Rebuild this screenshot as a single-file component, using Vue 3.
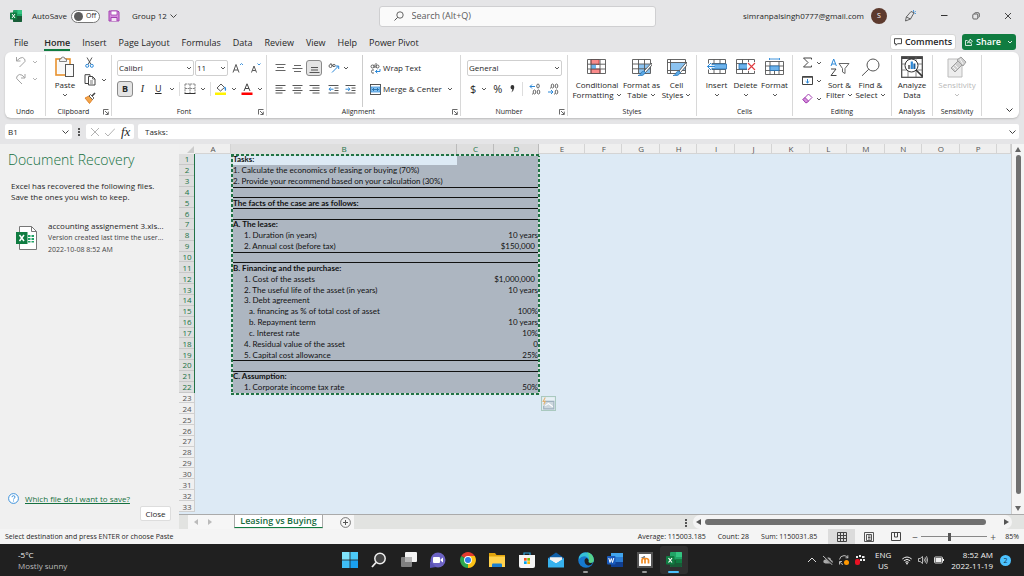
<script setup>
import { h, ref } from 'vue'

const Chev = () =>
  h('svg', { class: 'chev', viewBox: '0 0 6 6', 'aria-hidden': 'true' }, [
    h('path', { d: 'M1 2l2 2 2-2', fill: 'none', stroke: 'currentColor', 'stroke-width': '0.9' })
  ])
const Launcher = () =>
  h('svg', { class: 'launch', viewBox: '0 0 6 6', 'aria-hidden': 'true' }, [
    h('path', { d: 'M.5 5.5V.5h5M2 2l3 3M5.3 2.6v2.9H2.4', fill: 'none', stroke: '#444', 'stroke-width': '.8' })
  ])

const tabs = ['File', 'Home', 'Insert', 'Page Layout', 'Formulas', 'Data', 'Review', 'View', 'Help', 'Power Pivot']
const cols = 'ABCDEFGHIJKLMNOP'.split('')
const font = ref('Calibri')
const size = ref('11')
const numberFormat = ref('General')
const cellName = ref('B1')
const formula = ref('Tasks:')
const zoom = ref(42)

const data = {
  1: { b: 'Tasks:', bold: true },
  2: { b: '1. Calculate the economics of leasing or buying (70%)' },
  3: { b: '2. Provide your recommend based on your calculation (30%)' },
  4: { line: true },
  5: { b: 'The facts of the case are as follows:', bold: true, line: true },
  6: { line: true },
  7: { b: 'A. The lease:', bold: true, line: true },
  8: { b: '1. Duration (in years)', ind: 1, d: '10 years' },
  9: { b: '2. Annual cost (before tax)', ind: 1, d: '$150,000', money: true },
  10: { line: true },
  11: { b: 'B. Financing and the purchase:', bold: true, line: true },
  12: { b: '1. Cost of the assets', ind: 1, d: '$1,000,000', money: true },
  13: { b: '2. The useful life of the asset (in years)', ind: 1, d: '10 years' },
  14: { b: '3. Debt agreement', ind: 1 },
  15: { b: 'a. financing as % of total cost of asset', ind: 2, d: '100%' },
  16: { b: 'b. Repayment term', ind: 2, d: '10 years' },
  17: { b: 'c. Interest rate', ind: 2, d: '10%' },
  18: { b: '4. Residual value of the asset', ind: 1, d: '0' },
  19: { b: '5. Capital cost allowance', ind: 1, d: '25%' },
  20: { line: true },
  21: { b: 'C. Assumption:', bold: true, line: true },
  22: { b: '1. Corporate income tax rate', ind: 1, d: '50%' }
}
const rows = Array.from({ length: 33 }, (_, i) => ({ n: i + 1, sel: i < 22, ...(data[i + 1] || {}) }))
</script>

<template>
  <div class="window">
    <header class="titlebar">
      <div class="title-left">
        <svg class="i12" viewBox="0 0 12 12"><rect x="3" y="0" width="9" height="12" rx="1" fill="#21a366"/><path d="M7.500 0H11a1 1 0 0 1 1 1v3H7.500z" fill="#33c481"/><path d="M3 6h9v5a1 1 0 0 1-1 1H4a1 1 0 0 1-1-1z" fill="#185c37"/><rect x="0" y="2.500" width="7" height="7" rx=".7" fill="#107c41"/><path d="M2 4l3 4M5 4L2 8" stroke="#fff" stroke-width="1"/></svg>
        <label class="autosave">AutoSave
          <span class="toggle"><input type="checkbox"><i class="knob"></i>Off</span>
        </label>
        <button class="plain save" aria-label="Save"><svg class="i12" viewBox="0 0 12 12"><path d="M1 1h9l1 1v9H1z" fill="#d58fdc" stroke="#a33fb1"/><path d="M3 1h6v4H3z" fill="#fff" stroke="#a33fb1" stroke-width=".8"/><path d="M3 11V7.500h6V11" fill="#f3e3f5" stroke="#a33fb1"/></svg></button>
        <button class="plain doc">Group 12 <svg class="c7" viewBox="0 0 7 6"><path d="M.500 1.500l3 3 3-3" fill="none" stroke="#333" stroke-width=".9"/></svg></button>
      </div>
      <label class="search">
        <svg class="i10" viewBox="0 0 10 10"><circle cx="6" cy="4" r="3.200" fill="none" stroke="#555" stroke-width=".9"/><path d="M3.700 6.300L.5 9.500" stroke="#555"/></svg>
        <input type="text" placeholder="Search (Alt+Q)" aria-label="Search">
      </label>
      <div class="title-right">
        <span class="account">simranpalsingh0777@gmail.com</span>
        <span class="avatar">S</span>
        <button class="plain pen" aria-label="Pen"><svg class="i12" viewBox="0 0 12 12"><path d="M1.500 11l.8-4L7 1.500l3 1.300L6.500 9 1.500 11zM2.300 7L6.500 9" fill="none" stroke="#444" stroke-width=".8"/><path d="M9.500 0v2M11.800 1l-1.500 1.500M10.500 3.500H12" stroke="#2b88d8" stroke-width=".8"/></svg></button>
        <button class="plain wbtn" aria-label="Minimize"><svg class="i8" viewBox="0 0 8 8"><path d="M1 3.500h6.500" stroke="#333"/></svg></button>
        <button class="plain wbtn" aria-label="Restore"><svg class="i8" viewBox="0 0 8 8"><rect x=".8" y="2" width="5" height="5" rx="1" fill="none" stroke="#444" stroke-width=".8"/><path d="M2.500 1.500Q2.500.7 3.500.7H6Q7.300.7 7.300 2v2.500q0 .8-.8.8" fill="none" stroke="#444" stroke-width=".8"/></svg></button>
        <button class="plain wbtn" aria-label="Close window"><svg class="i8" viewBox="0 0 8 8"><path d="M1 1l6 6M7 1L1 7" stroke="#333" stroke-width=".9"/></svg></button>
      </div>
    </header>

    <nav class="tabs">
      <button v-for="t in tabs" :key="t" class="plain tab" :class="{ active: t === 'Home' }">{{ t }}</button>
      <div class="tab-actions">
        <button class="comments"><svg class="i8" viewBox="0 0 8 8"><path d="M.5.700h7v5H3.500L2 7.300V5.700H.5z" fill="none" stroke="#333" stroke-width=".9"/></svg>Comments</button>
        <button class="share"><svg class="i8" viewBox="0 0 8 8"><path d="M2.500 2.500H.5v5h6V5.500M2.500 5Q2.800 2.700 5 2.700V1l2.500 2.300L5 5.300V3.900Q3.500 3.900 2.500 5z" fill="none" stroke="#fff" stroke-width=".8"/></svg>Share<Chev /></button>
      </div>
    </nav>

    <section class="ribbon">
      <div class="group g-undo">
        <div class="body col-undo">
          <button class="plain row dim" aria-label="Undo"><svg class="i12" viewBox="0 0 12 12"><path d="M1.500 1v4h4M1.700 4.800L5 2.100Q8 .5 9.600 3T8.500 7L4.500 11" fill="none" stroke="#a3a3a3"/></svg><Chev /></button>
          <button class="plain row dim" aria-label="Redo"><svg class="i12" viewBox="0 0 12 12"><path d="M10 1v4H6M9.800 4.800L7 2.100Q4 .5 2.200 3T3 7l4 4" fill="none" stroke="#a3a3a3"/></svg><Chev /></button>
        </div>
        <div class="glabel">Undo</div>
      </div>

      <div class="group g-clip">
        <div class="body">
          <button class="plain big paste"><svg class="i22" viewBox="0 0 22 22"><rect x="2" y="3" width="14" height="16" fill="#fff" stroke="#e8912d" stroke-width="1.600"/><rect x="3.500" y="4.500" width="11" height="13" fill="#f7f7f7"/><path d="M5.500 5.500V3H7q0-2 2-2t2 2h1.500v2.500z" fill="#f2f2f2" stroke="#777" stroke-width=".9"/><rect x="11.500" y="8.500" width="8" height="12" fill="#fafafa" stroke="#555"/></svg>Paste<Chev /></button>
          <div class="stack">
            <button class="plain row" aria-label="Cut"><svg class="i11" viewBox="0 0 11 11"><path d="M3 .5l4 7M8 .5l-4 7" stroke="#444" stroke-width=".9"/><circle cx="3.200" cy="8.800" r="1.500" fill="none" stroke="#2b88d8"/><circle cx="7.800" cy="8.800" r="1.500" fill="none" stroke="#2b88d8"/></svg></button>
            <button class="plain row" aria-label="Copy"><svg class="i12" viewBox="0 0 12 12"><path d="M4 9.500H1V.7h5V2" fill="none" stroke="#444"/><path d="M4.500 2.500h4l2.500 2.500v6H4.500z" fill="#fff" stroke="#444"/><path d="M8.500 2.500V5H11M6 7h3M6 9h3" fill="none" stroke="#444" stroke-width=".7"/></svg><Chev /></button>
            <button class="plain row" aria-label="Format painter"><svg class="i12" viewBox="0 0 12 12"><path d="M1 6l4-2 3.500 3.500-3 4z" fill="#f3a54a" stroke="#d9761a" stroke-width=".8"/><path d="M5 4l1.500-1.500 3.500 3.500L8.500 7.500z" fill="#fff" stroke="#444" stroke-width=".8"/><path d="M8 4L11 1" stroke="#444" stroke-width="1.600"/></svg></button>
          </div>
        </div>
        <div class="glabel wl">Clipboard<Launcher /></div>
      </div>

      <div class="group g-font">
        <div class="body two">
          <div class="line">
            <span class="sel w-font"><select v-model="font" aria-label="Font"><option>Calibri</option></select><Chev /></span>
            <span class="sel w-size"><select v-model="size" aria-label="Font size"><option>11</option></select><Chev /></span>
            <button class="plain fs" aria-label="Increase font size"><svg class="i12" viewBox="0 0 12 12"><path d="M1 10.500L4 2.500l3 8M2 8h4" fill="none" stroke="#444" stroke-width=".9"/><path d="M8 3l1.500-1.500L11 3" fill="none" stroke="#2b88d8" stroke-width=".9"/></svg></button>
            <button class="plain fs" aria-label="Decrease font size"><svg class="i12" viewBox="0 0 12 12"><path d="M1.500 10.500L4 4l2.500 6.500M2.500 8.500h3" fill="none" stroke="#444" stroke-width=".9"/><path d="M7.500 1.500L9 3l1.500-1.500" fill="none" stroke="#2b88d8" stroke-width=".9"/></svg></button>
          </div>
          <div class="line fmt">
            <button class="pressed bold">B</button>
            <button class="plain ital">I</button>
            <button class="plain und"><u>U</u><Chev /></button>
            <i class="vsep"></i>
            <button class="plain row" aria-label="Borders"><svg class="i12" viewBox="0 0 12 12"><path d="M1 1h10M1 1v9M11 1v9M6 1v9M1 5.500h10" fill="none" stroke="#777" stroke-width=".9" stroke-dasharray="2 .6"/><path d="M.5 10.500h11" stroke="#333"/></svg><Chev /></button>
            <i class="vsep"></i>
            <button class="plain row" aria-label="Fill color"><svg class="i12" viewBox="0 0 12 12"><path d="M2 5l4-4 3.500 3.500L5.500 8z" fill="#fff" stroke="#444" stroke-width=".9"/><path d="M9.500 4q1.700 2 .5 3.500" fill="none" stroke="#2b88d8" stroke-width="1.300"/><rect x="0" y="9.500" width="11" height="2.500" fill="#fff200"/></svg><Chev /></button>
            <button class="plain row" aria-label="Font color"><svg class="i12" viewBox="0 0 12 12"><path d="M3 8L6 .8 9 8M4 5.500h4" fill="none" stroke="#444"/><rect x=".5" y="9.500" width="11" height="2.500" fill="#f00"/></svg><Chev /></button>
          </div>
        </div>
        <div class="glabel wl">Font<Launcher /></div>
      </div>

      <div class="group g-align">
        <div class="body">
          <div class="two a-left">
            <div class="line">
              <button class="plain ab" aria-label="Top align"><svg class="i11" viewBox="0 0 11 11"><path d="M.5 1.500h10M2 4.500h7M.5 7.500h10" stroke="#555" stroke-width=".9"/></svg></button>
              <button class="plain ab" aria-label="Middle align"><svg class="i11" viewBox="0 0 11 11"><path d="M2 2.500h7M.5 5.500h10M2 8.500h7" stroke="#555" stroke-width=".9"/></svg></button>
              <button class="pressed ab" aria-label="Bottom align"><svg class="i11" viewBox="0 0 11 11"><path d="M2 4.500h7M2 7h7M.5 9.500h10" stroke="#444" stroke-width=".9"/></svg></button>
              <button class="plain row orient" aria-label="Orientation"><svg class="i12" viewBox="0 0 12 12"><circle cx="2.500" cy="4" r="1.500" fill="none" stroke="#444" stroke-width=".8"/><path d="M2.500 1l3 3.500" stroke="#444" stroke-width=".8"/><circle cx="6" cy="3.500" r="1.200" fill="none" stroke="#444" stroke-width=".8"/><path d="M4 10.500l6.500-6.500M7.500 4H10.700V7" fill="none" stroke="#2b88d8"/></svg><Chev /></button>
            </div>
            <div class="line">
              <button class="plain ab" aria-label="Align left"><svg class="i11" viewBox="0 0 11 11"><path d="M.5 1.500h10M.5 4h7M.5 6.500h10M.5 9h7" stroke="#444" stroke-width=".9"/></svg></button>
              <button class="plain ab" aria-label="Center"><svg class="i11" viewBox="0 0 11 11"><path d="M.5 1.500h10M2 4h7M.5 6.500h10M2 9h7" stroke="#444" stroke-width=".9"/></svg></button>
              <button class="plain ab" aria-label="Align right"><svg class="i11" viewBox="0 0 11 11"><path d="M.5 1.500h10M3.500 4h7M.5 6.500h10M3.500 9h7" stroke="#444" stroke-width=".9"/></svg></button>
              <button class="plain ab" aria-label="Decrease indent"><svg class="i11" viewBox="0 0 11 11"><path d="M.5 1.500h10M6.500 4h4M6.500 6.500h4M.5 9h10" stroke="#444" stroke-width=".9"/><path d="M5.500 5.200H1M2.800 3.500L1 5.200 2.800 7" fill="none" stroke="#2b88d8"/></svg></button>
              <button class="plain ab" aria-label="Increase indent"><svg class="i11" viewBox="0 0 11 11"><path d="M.5 1.500h10M6.500 4h4M6.500 6.500h4M.5 9h10" stroke="#444" stroke-width=".9"/><path d="M.5 5.200H5M3.200 3.500L5 5.200 3.200 7" fill="none" stroke="#2b88d8"/></svg></button>
            </div>
          </div>
          <div class="two a-right">
            <div class="line"><button class="plain row"><svg class="i11" viewBox="0 0 11 11"><circle cx="2.500" cy="3.500" r="1.500" fill="none" stroke="#444" stroke-width=".8"/><path d="M4.200 1.500v3.500M6 0v5" stroke="#444" stroke-width=".8"/><circle cx="7.500" cy="3.500" r="1.500" fill="none" stroke="#444" stroke-width=".8"/><path d="M4 7Q1.500 6 1.500 8.500T4 10" fill="none" stroke="#444" stroke-width=".8"/><path d="M10 6v2.500H5.500M7.300 6.800L5.500 8.500l1.800 1.700" fill="none" stroke="#2b88d8"/></svg>Wrap Text</button></div>
            <div class="line"><button class="plain row merge"><svg class="i11" viewBox="0 0 11 11"><rect x=".5" y=".5" width="10" height="10" fill="#fff" stroke="#444" stroke-width=".9"/><rect x="1" y="3" width="9" height="5" fill="#8ec5f0" stroke="#2b88d8" stroke-width=".7"/><path d="M2.500 5.500h6M4 4L2.500 5.500 4 7M7 4l1.500 1.500L7 7" fill="none" stroke="#1464a5" stroke-width=".8"/></svg><span>Merge &amp; Center</span><Chev /></button></div>
          </div>
        </div>
        <div class="glabel wl">Alignment<Launcher /></div>
      </div>

      <div class="group g-num">
        <div class="body two">
          <div class="line"><span class="sel w-num"><select v-model="numberFormat" aria-label="Number format"><option>General</option></select><Chev /></span></div>
          <div class="line nums">
            <button class="plain row sym">$<Chev /></button>
            <button class="plain sym">%</button>
            <button class="plain" aria-label="Comma style"><svg class="i8" viewBox="0 0 8 8"><path d="M4.500 0q2 .2 1.700 3T3 7.500Q4.500 6 4.400 4.500 2.500 4.300 2.500 2.200T4.500 0z" fill="#333"/></svg></button>
            <i class="vsep"></i>
            <button class="plain dec" aria-label="Increase decimal"><svg class="i12" viewBox="0 0 12 12"><path d="M6 3.500H1M3 1.500l-2 2 2 2" fill="none" stroke="#2b88d8"/><g fill="none" stroke="#444" stroke-width=".8"><ellipse cx="9" cy="3" rx="1.300" ry="2"/><ellipse cx="5.500" cy="9" rx="1.300" ry="2"/><ellipse cx="9.500" cy="9" rx="1.300" ry="2"/></g><path d="M3 11h.8" stroke="#444"/></svg></button>
            <button class="plain dec" aria-label="Decrease decimal"><svg class="i12" viewBox="0 0 12 12"><path d="M1 9h5M4 7l2 2-2 2" fill="none" stroke="#2b88d8"/><g fill="none" stroke="#444" stroke-width=".8"><ellipse cx="5.500" cy="3" rx="1.300" ry="2"/><ellipse cx="9.500" cy="3" rx="1.300" ry="2"/><ellipse cx="9.500" cy="9" rx="1.300" ry="2"/></g><path d="M3 5h.8M7 11h.8" stroke="#444"/></svg></button>
          </div>
        </div>
        <div class="glabel wl">Number<Launcher /></div>
      </div>

      <div class="group g-styles">
        <div class="body">
          <button class="plain big w50"><svg class="i20" viewBox="0 0 20 18"><rect x=".5" y="1.500" width="18" height="14" fill="#fff"/><path d="M4 1.500h8v5H4zM4 11h9v4.500H4z" fill="#f98a8a" stroke="#d13438" stroke-width=".8"/><path d="M4 6.500h5V11H4z" fill="#6cb2eb"/><path d="M.5 1.500h18v14H.5zM.5 6.200h18M.5 11h18M4 1.500v14M13 1.500v14" fill="none" stroke="#555" stroke-width=".9"/></svg><span>Conditional</span><span>Formatting <Chev /></span></button>
          <button class="plain big w38"><svg class="i20" viewBox="0 0 20 18"><path d="M.5 1.500h18v14H.5z" fill="#fff"/><path d="M6.500 6h12v9.500h-12z" fill="#8cc3f0"/><path d="M.5 1.500h18v14H.5zM.5 6h18M.5 10.800h18M6.500 1.500v14M12.500 1.500v14" fill="none" stroke="#555" stroke-width=".9"/><path d="M19.500 5l-7.500 8 1.500 1.500L20 7z" fill="#fff" stroke="#444" stroke-width=".8"/><path d="M12 13q-3 .5-3.500 3-1 1.500-2.500 1.500 5 1.500 7.500-3z" fill="#5ba9e6" stroke="#2471b5" stroke-width=".7"/></svg><span>Format as</span><span>Table <Chev /></span></button>
          <button class="plain big w32"><svg class="i20" viewBox="0 0 20 18"><path d="M.5 1.500h18v14H.5z" fill="#fff"/><path d="M3.500 4.500h15v8h-15z" fill="#8cc3f0"/><path d="M.5 1.500h18v14H.5zM.5 4.500h18M3.500 1.500v14M.5 12.500h18" fill="none" stroke="#555" stroke-width=".9"/><path d="M19.500 4l-7.500 9 1.500 1.500L20 7z" fill="#fff" stroke="#444" stroke-width=".8"/><path d="M12 13q-3 .5-3.500 3-1 1.500-2.500 1.500 5 1.500 7.500-3z" fill="#5ba9e6" stroke="#2471b5" stroke-width=".7"/></svg><span>Cell</span><span>Styles <Chev /></span></button>
        </div>
        <div class="glabel">Styles</div>
      </div>

      <div class="group g-cells">
        <div class="body">
          <button class="plain big w28"><svg class="i20" viewBox="0 0 20 18"><path d="M1.500 1.500h17v14h-17zM1.500 5.500h17M1.500 11.500h17M7 1.500v14M13 1.500v14" fill="#fff" stroke="#555" stroke-width=".9"/><path d="M5 6h14.500v5H5z" fill="#6db3ec" stroke="#2471b5" stroke-width=".8"/><path d="M7.500 8.500H0M4 4.500L.5 8.500 4 12.500" fill="none" stroke="#fff" stroke-width="2.500"/><path d="M8 8.500H.5M4 5L.5 8.500 4 12" fill="none" stroke="#2b88d8"/></svg><span>Insert</span><Chev /></button>
          <button class="plain big w28"><svg class="i20" viewBox="0 0 20 18"><path d="M.5 1.500h18v14H.5zM.5 5.500h18M.5 11.500h18M6.500 1.500v14M12.500 1.500v14" fill="#fff" stroke="#555" stroke-width=".9"/><path d="M3 6h9l-1 5H3z" fill="#6db3ec" stroke="#2471b5" stroke-width=".8"/><path d="M11 4h9v9h-9z" fill="#fff"/><path d="M12 5l7 7M19 5l-7 7" stroke="#e0393e" stroke-width="1.100"/></svg><span>Delete</span><Chev /></button>
          <button class="plain big w28"><svg class="i20" viewBox="0 0 20 18"><path d="M.5 3.500h18v13H.5zM.5 8h18M.5 12.500h18M5 3.500v13M14 3.500v13M9.500 12.500v4" fill="#fff" stroke="#555" stroke-width=".9"/><path d="M5 8h9v4.500H5z" fill="#6db3ec" stroke="#2471b5" stroke-width=".8"/><path d="M4.500 1h10M4.500 0v2M14.500 0v2" stroke="#2b88d8" stroke-width=".9"/></svg><span>Format</span><Chev /></button>
        </div>
        <div class="glabel">Cells</div>
      </div>

      <div class="group g-edit">
        <div class="body">
          <div class="stack">
            <button class="plain row" aria-label="AutoSum"><svg class="i11" viewBox="0 0 11 11"><path d="M9.500 2.500V1H1.500L6 5.500 1.500 10h8V8.500" fill="none" stroke="#444"/></svg><Chev /></button>
            <button class="plain row" aria-label="Fill"><svg class="i11" viewBox="0 0 11 11"><path d="M.5 1.500h10v8H.5z" fill="#fff" stroke="#444"/><path d="M.5 2h10" stroke="#444" stroke-width="1.500"/><path d="M5.500 4v4M3.700 6.300L5.500 8l1.800-1.700" fill="none" stroke="#2b88d8"/></svg><Chev /></button>
            <button class="plain row" aria-label="Clear"><svg class="i11" viewBox="0 0 11 11"><path d="M1 6.500L6.500 1 10 4.500 5 9.500H3.500z" fill="#fff" stroke="#a33fb1"/><path d="M1 6.500L3 4.500l3.500 3.500L5 9.700H3.500z" fill="#d58fdc" stroke="#a33fb1"/></svg><Chev /></button>
          </div>
          <button class="plain big w30"><svg class="i20" viewBox="0 0 20 18"><path d="M1 8L3.700 1l2.700 7M2 6h3.500" fill="none" stroke="#2b88d8"/><path d="M1 11h5L1 17.500h5.500" fill="none" stroke="#444"/><path d="M9 5.500h10l-4 5v5l-2.500-1.500v-3.500z" fill="#fff" stroke="#666"/></svg><span>Sort &amp;</span><span>Filter <Chev /></span></button>
          <button class="plain big w30"><svg class="i20" viewBox="0 0 20 18"><circle cx="12" cy="7" r="6" fill="#fff" stroke="#555"/><path d="M7.800 11.200L1 17.800" stroke="#555"/></svg><span>Find &amp;</span><span>Select <Chev /></span></button>
        </div>
        <div class="glabel">Editing</div>
      </div>

      <div class="group g-anal">
        <div class="body">
          <button class="plain big w40"><svg class="i22" viewBox="0 0 22 22"><rect x=".7" y=".7" width="20.600" height="20.600" fill="#fff" stroke="#444" stroke-width="1.200"/><path d="M.5 2h21" stroke="#444" stroke-width="2"/><path d="M.5 8h21M.5 14h21M7 1v20M15 1v20" stroke="#666" stroke-width=".8"/><circle cx="10.500" cy="9.500" r="6.500" fill="#fff" stroke="#333"/><path d="M7 9h2.200v4H7z" fill="#777"/><path d="M9.700 5.500h2.200V13H9.700z" fill="#2b88d8"/><path d="M12.400 7.500h2V13h-2z" fill="#1b5e9b"/><path d="M15 14l6.500 6.500" stroke="#333" stroke-width="1.600"/></svg><span>Analyze</span><span>Data</span></button>
        </div>
        <div class="glabel">Analysis</div>
      </div>

      <div class="group g-sens">
        <div class="body">
          <button class="plain big w48 off" disabled><svg class="i22" viewBox="0 0 22 22"><path d="M2 3h14v18H2z" fill="#ededed" stroke="#bbb"/><path d="M5 12l7-7 4 4-7 7zM11 4l4-3 5 5-3 4z" fill="#d0d0d0" stroke="#a0a0a0"/><path d="M7 11l3 3M9 9l3 3M14 3l3 5" stroke="#fff" stroke-width=".8"/></svg><span>Sensitivity</span><Chev /></button>
        </div>
        <div class="glabel">Sensitivity</div>
      </div>
      <button class="plain collapse" aria-label="Collapse ribbon"><svg class="c7" viewBox="0 0 7 6"><path d="M.5 1.500l3 3 3-3" fill="none" stroke="#333"/></svg></button>
    </section>

    <section class="fbar">
      <div class="namebox"><input v-model="cellName" aria-label="Name box"><svg class="c7" viewBox="0 0 7 6"><path d="M.5 1.500l3 3 3-3" fill="none" stroke="#444"/></svg></div>
      <svg class="dots" viewBox="0 0 2 8"><path d="M0 0h2v2H0zM0 3h2v2H0zM0 6h2v2H0z" fill="#555"/></svg>
      <div class="fx">
        <button class="plain" aria-label="Cancel"><svg class="i8" viewBox="0 0 8 8"><path d="M0 0l8 8M8 0L0 8" stroke="#aaa" stroke-width=".9"/></svg></button>
        <button class="plain" aria-label="Enter"><svg class="i10" viewBox="0 0 10 10"><path d="M0 6l3 3 7-7.500" fill="none" stroke="#aaa" stroke-width=".9"/></svg></button>
        <button class="plain fxb">fx</button>
      </div>
      <div class="formula"><input v-model="formula" aria-label="Formula bar"><svg class="c7" viewBox="0 0 7 6"><path d="M.5 1.500l3 3 3-3" fill="none" stroke="#444"/></svg></div>
    </section>

    <main class="main">
      <aside class="pane">
        <h2>Document Recovery</h2>
        <p>Excel has recovered the following files.<br>Save the ones you wish to keep.</p>
        <div class="file">
          <svg class="ficon" viewBox="0 0 22 24"><path d="M3.500.5h12l5 5v18h-17z" fill="#fff" stroke="#777"/><path d="M15.500.5v5h5" fill="none" stroke="#777"/><path d="M12 9h2.500v2H12zM15.500 9H18v2h-2.500zM12 12h2.500v2H12zM15.500 12H18v2h-2.500zM12 15h2.500v1.500H12zM15.500 15H18v1.500h-2.500z" fill="#21a366"/><rect x="0" y="6" width="11.500" height="12" fill="#107c41"/><path d="M3.500 9l4.500 6M8 9l-4.500 6" stroke="#fff" stroke-width="1.500"/></svg>
          <div class="fmeta"><b>accounting assignement 3.xls...</b><span>Version created last time the user...</span><span>2022-10-08 8:52 AM</span></div>
        </div>
        <div class="help">
          <svg class="i11" viewBox="0 0 11 11"><circle cx="5.500" cy="5.500" r="4.900" fill="#fff" stroke="#2b88d8" stroke-width=".9"/><path d="M4 4.200q0-1.500 1.500-1.500T7 4.100q0 .8-1 1.300-.5.300-.5 1.100M5.500 7.500v1" fill="none" stroke="#2b88d8" stroke-width=".9"/></svg>
          <a href="#">Which file do I want to save?</a>
        </div>
        <button class="close">Close</button>
      </aside>

      <div class="sheet">
        <div class="gridwrap">
          <div class="gridbox">
            <table>
              <colgroup>
                <col class="k-h"><col class="k-a"><col class="k-b"><col class="k-c"><col class="k-d"><col class="k-e"><col v-for="n in 11" :key="n"><col class="k-q">
              </colgroup>
              <thead>
                <tr><th class="corner"><svg viewBox="0 0 8 8"><path d="M8 0v8H0z" fill="#ccc"/></svg></th><th v-for="c in cols" :key="c" :class="{ hs: 'BCD'.includes(c) }">{{ c }}</th><th></th></tr>
              </thead>
              <tbody>
                <tr v-for="r in rows" :key="r.n" :class="{ picked: r.sel, ruled: r.line }">
                  <th>{{ r.n }}</th><td></td>
                  <td class="b" :class="{ strong: r.bold, i1: r.ind === 1, i2: r.ind === 2, cur: r.n === 1 }">{{ r.b }}</td>
                  <td class="s"></td><td class="s d" :class="{ money: r.money }">{{ r.d }}</td>
                  <td colspan="13"></td>
                </tr>
              </tbody>
            </table>
            <div class="ants"><svg class="tag" viewBox="0 0 14 14"><rect x=".5" y=".5" width="13" height="13" fill="#e6f0f5" stroke="#a9c9bf"/><path d="M4 5h8v7H2.500V9" fill="#cdd8df" stroke="#9eb0bd"/><path d="M4 9l3-2 4 3" fill="none" stroke="#fff"/><path d="M4 1.500L2 5h2L2.500 8" fill="none" stroke="#e0b070"/></svg></div>
          </div>
          <div class="vscroll"><i class="up"></i><i class="vthumb"></i><i class="down"></i></div>
        </div>
        <div class="sheettabs">
          <div class="navs">
            <button class="plain" aria-label="Previous sheet"><i class="larr"></i></button>
            <button class="plain" aria-label="Next sheet"><i class="rarr"></i></button>
          </div>
          <button class="stab">Leasing vs Buying</button>
          <button class="plain add" aria-label="New sheet"><svg class="i11" viewBox="0 0 11 11"><circle cx="5.500" cy="5.500" r="4.900" fill="none" stroke="#666" stroke-width=".9"/><path d="M5.500 3v5M3 5.500h5" stroke="#555"/></svg></button>
          <svg class="dots sdots" viewBox="0 0 2 8"><path d="M0 0h2v2H0zM0 3h2v2H0zM0 6h2v2H0z" fill="#555"/></svg>
          <div class="hscroll"><i class="larr dk"></i><i class="hthumb"></i><i class="rarr dk"></i></div>
        </div>
      </div>
    </main>

    <section class="status">
      <span class="msg">Select destination and press ENTER or choose Paste</span>
      <span class="st1">Average: 115003.185</span><span class="st2">Count: 28</span><span class="st3">Sum: 1150031.85</span>
      <button class="plain view on" aria-label="Normal view"><svg class="i10" viewBox="0 0 10 10"><path d="M.5.5h9v9h-9zM.5 3.500h9M.5 6.500h9M3.500.5v9M6.500.5v9" fill="none" stroke="#444"/></svg></button>
      <button class="plain view" aria-label="Page layout view"><svg class="i10" viewBox="0 0 10 10"><path d="M.5.5h9v9h-9zM2.500 2.500h5v6h-5zM4 4h2.500M4 5.500h2.500M4 7h2.500" fill="none" stroke="#444" stroke-width=".9"/></svg></button>
      <button class="plain view" aria-label="Page break view"><svg class="i10" viewBox="0 0 10 10"><path d="M.5.5h9v8h-9zM3.500.5v4.500h3V.5" fill="none" stroke="#444"/></svg></button>
      <button class="plain zb" aria-label="Zoom out">−</button>
      <input v-model="zoom" class="zoom" type="range" min="0" max="100" aria-label="Zoom">
      <button class="plain zb" aria-label="Zoom in">+</button>
      <span class="pct">85%</span>
    </section>

    <footer class="taskbar">
      <div class="weather"><span>-5°C</span><span>Mostly sunny</span></div>
      <div class="apps">
        <button class="plain app" aria-label="Start"><svg viewBox="0 0 16 16"><path d="M0 0h7.600v7.600H0z" fill="#7fe3fb"/><path d="M8.400 0H16v7.600H8.400z" fill="#4cc9f7"/><path d="M0 8.400h7.600V16H0z" fill="#3fbdf5"/><path d="M8.400 8.400H16V16H8.400z" fill="#1aa0f0"/></svg></button>
        <button class="plain app" aria-label="Search"><svg viewBox="0 0 16 16"><circle cx="9" cy="6.500" r="5.200" fill="#444" stroke="#eee" stroke-width="1.500"/><path d="M5 10.500L1 15" stroke="#eee" stroke-width="1.800"/></svg></button>
        <button class="plain app" aria-label="Task view"><svg viewBox="0 0 16 16"><rect x="4" y="0" width="12" height="10" rx="1" fill="#f3f3f3"/><rect x="0" y="5" width="11" height="10" rx="1" fill="#808080"/><path d="M4 5h7v5H4z" fill="#b5b5b5"/></svg></button>
        <button class="plain app" aria-label="Chat"><svg viewBox="0 0 16 16"><circle cx="8" cy="8" r="7.500" fill="#6c63c4"/><path d="M0 16V9l6 6z" fill="#5b53b5"/><rect x="3" y="5" width="7" height="6" rx="1" fill="#fff"/><path d="M10.500 7.500L13 5.500v5l-2.500-2z" fill="#fff"/></svg></button>
        <button class="plain app" aria-label="Chrome"><svg viewBox="0 0 16 16"><path d="M8 8L1.200 4A7.900 7.900 0 0 1 14.800 4z" fill="#e33b2e"/><path d="M8 8l6.800-4A7.900 7.900 0 0 1 8 15.900z" fill="#fbc116"/><path d="M8 8v7.900A7.900 7.900 0 0 1 1.200 4z" fill="#2da94f"/><path d="M8 4h6.900v1L11 8z" fill="#fbc116"/><circle cx="8" cy="8" r="3.900" fill="#fff"/><circle cx="8" cy="8" r="3" fill="#2f7de9"/></svg></button>
        <button class="plain app" aria-label="File explorer"><svg viewBox="0 0 16 16"><path d="M0 1h6l1.500 2H16v6H0z" fill="#e0a30c"/><path d="M0 4.500h16V15H0z" fill="#ffd24d"/><path d="M3 15v-2.500q0-1 1-1h8q1 0 1 1V15z" fill="#1a7fd0"/></svg></button>
        <button class="plain app" aria-label="Store"><svg viewBox="0 0 16 16"><path d="M5 3.500V1h6v2.500" fill="none" stroke="#2b9fd8" stroke-width="1.200"/><path d="M0 3h16v11q0 2-2 2H2q-2 0-2-2z" fill="#f5f5f5"/><path d="M5 6h2.700v2.700H5z" fill="#f25022"/><path d="M8.300 6H11v2.700H8.300z" fill="#7fba00"/><path d="M5 9.300h2.700V12H5z" fill="#00a4ef"/><path d="M8.300 9.300H11V12H8.300z" fill="#ffb900"/></svg></button>
        <button class="plain app" aria-label="Mail"><svg viewBox="0 0 16 16"><path d="M0 6l8-5.500L16 6v9H0z" fill="#0f5fa8"/><path d="M2 5.500h12V10l-6 3-6-3z" fill="#f2f2f2"/><path d="M0 6l8 5 8-5v9.500H0z" fill="#37b2ee"/><path d="M0 6l8 5 8-5-8 4z" fill="#f2f2f2"/><path d="M2 5.500h12v1.700L8 11 2 7.200z" fill="#f2f2f2"/></svg></button>
        <button class="plain app run" aria-label="Edge"><svg viewBox="0 0 16 16"><circle cx="8" cy="8" r="7.800" fill="#1679cf"/><path d="M1 5A7.800 7.800 0 0 1 15.800 8q0 3-3.200 3-2.600 0-2-1.800Q11 5.500 7.500 4.500 3.500 3.800 1 7z" fill="#35c1d6"/><path d="M9 .3A7.800 7.800 0 0 1 15.800 8q0 3-3.200 3-2.600 0-2-1.800Q12 4 9 .3z" fill="#56d38b"/><path d="M6.500 8.500q0-2 2-2.500 2.200.5 2.200 2.700-1 1.800 1.900 2.300 2 0 2.400-.4Q13 14 10 13.500 6.500 12.500 6.500 8.500z" fill="#202020"/></svg></button>
        <button class="plain app" aria-label="Word"><svg viewBox="0 0 16 16"><rect x="4" y="1" width="12" height="14" rx="1" fill="#2b7cd3"/><path d="M4 1h12v4H4z" fill="#41a5ee"/><path d="M4 10h12v5H4z" fill="#103f91"/><rect x="0" y="4" width="8.500" height="8.500" rx="1" fill="#185abd"/><path d="M1.800 6l1.200 4.500L4.300 6.500l1.200 4L6.800 6" fill="none" stroke="#fff"/></svg></button>
        <button class="plain app run" aria-label="Moodle"><svg viewBox="0 0 16 16"><path d="M0 0h16v16H0z" fill="#555"/><path d="M2 2h12v12H2z" fill="#fff"/><path d="M5 11.500V8q0-1.500 1.500-1.500T8 8v3.500M8 8q0-1.500 1.500-1.500T11.500 8v3.500" fill="none" stroke="#f18a21" stroke-width="1.700"/><path d="M3.500 6l4-2 1 1.500z" fill="#555"/></svg></button>
        <button class="plain app run now" aria-label="Excel"><svg viewBox="0 0 16 16"><rect x="4" y="0" width="12" height="15" rx="1" fill="#21a366"/><path d="M10 0h5q1 0 1 1v4h-6z" fill="#33c481"/><path d="M4 7.500h12V14q0 1-1 1H5q-1 0-1-1z" fill="#185c37"/><path d="M10 7.500h6V11h-6z" fill="#107c41"/><rect x="0" y="4" width="8.500" height="8.500" rx="1" fill="#107c41"/><path d="M2.500 6l3.500 4.500M6 6l-3.500 4.500" stroke="#fff" stroke-width="1.200"/></svg></button>
      </div>
      <div class="tray">
        <svg class="tr" viewBox="0 0 10 10"><path d="M1 7l4-4 4 4" fill="none" stroke="#ddd"/></svg>
        <svg class="tr" viewBox="0 0 10 10"><path d="M2.500 8.500Q0 8 .3 6.200T2.600 4.500Q3.500 2 6 2.600T8 5q2 .3 1.800 2T8 8.500z" fill="#aaa"/><path d="M0 0l10 10" stroke="#222" stroke-width="2"/><path d="M0 1l9.500 9" stroke="#ccc" stroke-width=".9"/></svg>
        <svg class="tr" viewBox="0 0 10 10"><path d="M.5 4.500Q1 .8 5 .6q2.500 0 3.800 2V.3M9.300 2.800H6.500M.5 9.500V6.500H3M.8 7Q2 9 4 9.500" fill="none" stroke="#ccc" stroke-width=".9"/><circle cx="7.500" cy="7.500" r="2.500" fill="#ff9800"/></svg>
        <svg class="tr" viewBox="0 0 10 10"><path d="M1 1h2v2H1zM4 0h2v2H4zM7 1h2.500v2H7zM5 4h2v2H5zM8 4h2v2H8z" fill="#eee"/><rect x="0" y="4" width="5" height="6" rx="2" fill="#e81123"/></svg>
        <div class="lang"><span>ENG</span><span>US</span></div>
        <svg class="tr" viewBox="0 0 10 10"><path d="M.3 4Q5 0 9.700 4M1.800 5.700Q5 3 8.200 5.700M3.300 7.300Q5 6 6.700 7.300" fill="none" stroke="#eee"/><circle cx="5" cy="8.500" r=".9" fill="#eee"/></svg>
        <svg class="tr" viewBox="0 0 10 10"><path d="M.5 3.500h1.700L4.500 1.500v7L2.200 6.500H.5zM6 3.500q1 1.500 0 3M7.200 2.300q2 2.700 0 5.400M8.500 1.200q2.500 3.800 0 7.600" fill="none" stroke="#ddd" stroke-width=".8"/></svg>
        <svg class="tr" viewBox="0 0 10 10"><rect x=".5" y="2" width="8" height="6" rx="1" fill="none" stroke="#eee" stroke-width=".9"/><path d="M1.500 3h6v4h-6zM9 4h1v2H9z" fill="#eee"/></svg>
        <div class="clock"><span>8:52 AM</span><span>2022-11-19</span></div>
        <span class="badge">2</span>
      </div>
    </footer>
  </div>
</template>

<style>
body { margin: 0; overflow: hidden; }
</style>

<style scoped>
.window { height: 100vh; display: flex; flex-direction: column; background: #e5e5e7; color: #262626; font: 8px/10px "Open Sans", "Noto Sans", sans-serif; }
.window * { box-sizing: border-box; }
svg { display: block; flex: none; }
button, input, select { font: inherit; color: inherit; }
.plain { border: 0; background: none; padding: 0; margin: 0; display: flex; align-items: center; justify-content: center; }
.chev { width: 6px; height: 6px; display: inline-block; color: #444; }
.i8 { width: 8px; height: 8px; } .i10 { width: 10px; height: 10px; } .i11 { width: 11px; height: 11px; }
.i12 { width: 12px; height: 12px; } .i20 { width: 20px; height: 18px; } .i22 { width: 22px; height: 22px; }
.c7 { width: 7px; height: 6px; }

.titlebar { height: 32px; display: grid; grid-template-columns: 1fr 277px 1fr; align-items: center; padding-left: 10px; flex: none; }
.title-left, .title-right { display: flex; align-items: center; }
.autosave { display: flex; align-items: center; gap: 4px; margin-left: 10px; }
.toggle { position: relative; display: flex; align-items: center; width: 29px; height: 13px; border: 1px solid #777; border-radius: 7px; background: #fff; gap: 3px; padding-left: 2px; font-size: 7px; }
.toggle input { position: absolute; inset: 0; opacity: 0; margin: 0; }
.knob { width: 9px; height: 9px; border-radius: 50%; background: #5c5c5c; }
.save { margin-left: 8px; } .doc { margin-left: 12px; gap: 3px; }
.search { height: 21px; display: flex; align-items: center; gap: 8px; padding-left: 14px; background: #fafafa; border: 1px solid #cfcfd1; border-radius: 3px; }
.search input { border: 0; background: none; outline: 0; padding: 0; flex: 1; font-size: 9px; }
.search input::placeholder { color: #5a5a5a; opacity: 1; }
.title-right { justify-content: flex-end; padding-right: 12px; }
.avatar { width: 16px; height: 16px; border-radius: 50%; background: #5d3a2e; color: #fff; font-size: 7px; line-height: 16px; text-align: center; margin-left: 7px; }
.pen { margin-left: 17px; } .wbtn { margin-left: 24px; }

.tabs { height: 20px; display: flex; align-items: stretch; gap: 12px; padding: 0 8px 0 14px; flex: none; font-size: 9px; }
.tab { border-bottom: 2px solid transparent; margin-bottom: 1px; padding-top: 4px; }
.tab:first-child { margin-right: 4px; }
.tab.active { font-weight: 600; border-color: #107c41; }
.tab-actions { margin-left: auto; display: flex; gap: 6px; align-items: center; font-weight: 600; padding-bottom: 1px; }
.comments, .share { height: 16px; border-radius: 3px; display: flex; align-items: center; justify-content: center; gap: 3px; padding: 0; font-weight: 600; }
.comments { width: 66px; border: 1px solid #d6d6d6; background: #fff; }
.share { width: 54px; border: 0; background: #107c41; color: #fff; }
.share .chev { color: #fff; margin-left: 3px; }

.ribbon { margin: 0 5px; height: 66px; display: flex; background: #fff; border-radius: 6px; box-shadow: 0 1px 2px #bbb; padding: 3px 0 2px; flex: none; }
.group { border-right: 1px solid #d8d8d8; display: flex; flex-direction: column; flex: none; }
.body { height: 52px; display: flex; }
.glabel { position: relative; font-size: 7px; line-height: 9px; text-align: center; }
.wl { padding-right: 10px; }
.launch { position: absolute; width: 6px; height: 6px; right: 2px; top: 2px; }
.g-undo { width: 41px; } .g-clip { width: 66px; } .g-font { width: 155px; } .g-align { width: 194px; } .g-num { width: 107px; }
.g-styles { width: 129px; } .g-cells { width: 96px; } .g-edit { width: 99px; } .g-anal { width: 41px; } .g-sens { width: 49px; }
.row { gap: 5px; justify-content: flex-start; }
.col-undo { flex-direction: column; gap: 5px; padding: 1px 0 0 10px; }
.dim .chev { color: #aaa; }
.stack { display: flex; flex-direction: column; justify-content: space-between; padding: 2px 0 3px; }
.big { flex-direction: column; justify-content: flex-start; padding-top: 1px; }
.big > svg:first-child { margin-bottom: 2px; height: 22px; }
.big > .i20 { padding: 2px 0; }
.big span { line-height: 10px; white-space: nowrap; }
.big > .chev { margin-top: 2px; }
.paste { width: 38px; }
.two { display: flex; flex-direction: column; gap: 5px; padding-top: 5px; }
.line { display: flex; align-items: center; height: 16px; }
.g-font .body { padding-left: 5px; }
.sel { position: relative; height: 16px; border: 1px solid #cfcfcf; border-radius: 2px; display: block; }
.sel select { appearance: none; border: 0; background: none; width: 100%; height: 14px; padding: 0 0 0 1px; display: block; }
.sel .chev { position: absolute; right: 1px; top: 4px; pointer-events: none; }
.w-font { width: 77px; } .w-size { width: 33px; margin-left: 1px; } .w-num { width: 95px; margin-left: 6px; }
.fs { margin-left: 4px; } .fs + .fs { margin-left: 6px; }
.pressed { background: #e4e4e4; border: 1px solid #8a8a8a; border-radius: 3px; padding: 0; width: 16px; height: 16px; display: flex; align-items: center; justify-content: center; }
.fmt { font-size: 9px; gap: 4px; }
.bold { font-weight: 700; }
.ital { font-family: "Liberation Serif", serif; font-style: italic; width: 11px; font-size: 10px; }
.und { gap: 7px; margin-left: 3px; }
.fmt .row { gap: 4px; }
.vsep { width: 1px; height: 14px; background: #ddd; }
.a-left { width: 96px; padding-left: 5px; border-right: 1px solid #ccc; }
.a-left .line { gap: 1px; } .ab { width: 16px; height: 16px; } .orient { margin-left: 5px; gap: 3px; }
.a-left .line:last-child .ab:nth-child(4) { margin-left: 2px; }
.a-right { padding-left: 7px; } .a-right .row { gap: 2px; } .merge .chev { margin-left: 3px; }
.nums { padding-left: 9px; gap: 6px; } .sym { font-size: 11px; }
.g-styles .body { padding-left: 4px; }
.w50 { width: 50px; } .w38 { width: 39px; } .w32 { width: 31px; } .w28 { width: 29px; } .w30 { width: 31px; } .w40 { width: 40px; } .w48 { width: 48px; }
.g-cells .body { padding-left: 5px; }
.g-edit .stack { padding-left: 9px; width: 31px; } .g-edit .stack .row { gap: 3px; }
.off, .off .chev { color: #b8b8b8; }
.collapse { margin-left: auto; margin-right: 6px; align-self: flex-end; height: 12px; }

.fbar { display: flex; align-items: center; margin: 6px 5px 5px; height: 15px; flex: none; }
.namebox, .fx, .formula { height: 15px; background: #fff; border-radius: 2px; display: flex; align-items: center; }
.namebox { width: 67px; padding: 0 3px; }
.namebox input, .formula input { border: 0; outline: 0; background: none; padding: 0; min-width: 0; flex: 1; }
.dots { width: 2px; height: 8px; margin: 0 6px; }
.fx { width: 48px; gap: 6px; padding-left: 5px; }
.fxb { font: italic 13px/14px "Liberation Serif", serif; }
.formula { flex: 1; margin-left: 4px; padding: 0 3px 0 7px; }

.main { flex: 1; display: flex; min-height: 0; }
.pane { width: 179px; background: #f0f0f0; display: flex; flex-direction: column; flex: none; padding: 0 8px; }
.pane h2 { margin: 6px 0 0; font: 300 14px/20px "Open Sans", sans-serif; color: #15703f; white-space: nowrap; }
.pane p { margin: 10px 0 0 3px; line-height: 11px; white-space: nowrap; font-size: 8px; }
.file { display: flex; gap: 10px; margin: 18px 0 0 8px; align-items: center; }
.ficon { width: 22px; height: 24px; }
.fmeta { display: flex; flex-direction: column; line-height: 12px; white-space: nowrap; font-size: 7px; color: #444; }
.fmeta b { font-weight: 400; font-size: 8px; color: #262626; }
.help { margin-top: auto; display: flex; align-items: center; gap: 6px; }
.help a { color: #15703f; white-space: nowrap; }
.close { align-self: flex-end; width: 31px; height: 15px; margin: 2px 0 8px; padding: 0; border: 1px solid #ddd; border-radius: 2px; background: #fff; }

.sheet { flex: 1; display: flex; flex-direction: column; min-width: 0; }
.gridwrap { flex: 1; display: flex; min-height: 0; background: #f0f0f0; }
.gridbox { flex: 1; position: relative; display: grid; background: #ddeaf5; padding-bottom: 2px; }
table { border-collapse: separate; border-spacing: 0; table-layout: fixed; width: 100%; font: 8px/10px Lato, "Open Sans", sans-serif; color: #111; }
.k-h { width: 16px; } .k-a { width: 36px; } .k-b { width: 226px; } .k-c { width: 37px; } .k-d { width: 45px; } .k-e { width: 46px; } .k-q { width: 14px; }
th, td { padding: 0; height: 10px; line-height: 10px; white-space: nowrap; }
th { font-family: "Open Sans", sans-serif; }
thead th { background: #efefef; font-weight: 400; color: #555; box-shadow: inset -1px -1px #d4d4d4; }
thead .hs { background: #dedede; color: #217346; box-shadow: inset -1px 0 #bbb; }
thead .corner { box-shadow: none; }
.corner svg { width: 7px; height: 7px; margin: 0 1px 0 auto; }
tbody th { background: #f0f0f0; font-weight: 400; color: #555; box-shadow: inset -1px -1px #cfcfcf; }
.picked th { background: #dedede; color: #217346; box-shadow: inset -1px 0 #217346, inset 0 -1px #c8c8c8; }
.picked .b, .picked .s { background: #adb6c1; }
.picked .b { padding-left: 2px; }
.picked .i1 { padding-left: 13px; } .picked .i2 { padding-left: 18px; }
.picked .cur { background: #ddeaf5; }
.ruled .b, .ruled .s { box-shadow: inset 0 1px #111; }
.strong { font-weight: 700; }
.d { text-align: right; padding-right: 1px; } .d.money { padding-right: 4px; }
.ants {
  --across: repeating-linear-gradient(90deg, #217346 0 3px, #d5e3dc 3px 5px);
  --down: repeating-linear-gradient(#217346 0 3px, #d5e3dc 3px 5px);
  position: absolute; left: 52px; top: 10px; width: 309px; height: calc((100% - 12px) * 2 / 3 + 2px);
  background: var(--across) top / 100% 2px no-repeat, var(--across) bottom / 100% 2px no-repeat, var(--down) left / 2px 100% no-repeat, var(--down) right / 2px 100% no-repeat;
}
.tag { position: absolute; left: 100%; top: 100%; margin: 1px; width: 15px; height: 15px; }
.vscroll { width: 13px; display: flex; flex-direction: column; align-items: center; gap: 3px; padding: 3px 0; background: #f4f4f4; border-left: 1px solid #ccc; }
.up, .down { border: 3px solid transparent; } .up { border-bottom: 5px solid #666; border-top: 0; } .down { border-top: 5px solid #666; border-bottom: 0; margin-top: auto; }
.vthumb { width: 5px; height: 93%; background: #707070; border-radius: 3px; }
.sheettabs { height: 15px; display: flex; background: #e2e3e1; border-top: 1px solid #aaa; flex: none; padding-left: 9px; }
.navs { width: 46px; background: #f6f6f6; display: flex; gap: 10px; padding-left: 6px; }
.larr, .rarr { border: 3px solid transparent; } .larr { border-right: 4px solid #bbb; border-left: 0; } .rarr { border-left: 4px solid #bbb; border-right: 0; }
.larr.dk { border-right: 5px solid #555; } .rarr.dk { border-left: 5px solid #555; }
.stab { width: 89px; padding: 0; background: #fff; border: 1px solid #aaa; border-width: 0 1px; border-bottom: 1px solid #107c41; color: #176b3d; font-weight: 600; font-size: 9px; margin-bottom: 1px; white-space: nowrap; }
.add { width: 31px; background: #f6f6f6; padding-left: 14px; }
.sdots { margin: 4px 6px 0 auto; }
.hscroll { width: 319px; margin-right: 12px; background: #f4f4f4; border-radius: 7px; display: flex; align-items: center; gap: 4px; padding: 0 3px; }
.hthumb { width: 281px; height: 6px; border-radius: 3px; background: #707070; margin-right: auto; }

.status { height: 15px; display: flex; align-items: center; background: #f4f4f4; padding: 0 5px; font-size: 7px; flex: none; white-space: nowrap; }
.msg { margin-right: auto; }
.st1, .st2 { margin-right: 12px; } .st3 { margin-right: 11px; }
.view { width: 27px; height: 15px; } .on { background: #dcdcdc; }
.zb { width: 12px; font-size: 10px; color: #555; }
.zoom { appearance: none; width: 66px; height: 10px; margin: 0; background: linear-gradient(#888, #888) center / 100% 1px no-repeat; }
.zoom::-webkit-slider-thumb { appearance: none; width: 3px; height: 8px; background: #555; }
.pct { margin-left: 6px; }

.taskbar { height: 32px; background: #202020; color: #f2f2f2; display: grid; grid-template-columns: 1fr 344px 1fr; align-items: center; flex: none; }
.weather { display: flex; flex-direction: column; line-height: 11px; padding-left: 18px; }
.weather span:last-child { color: #bbb; }
.apps { display: flex; justify-content: space-between; padding: 0 2px; }
.app { position: relative; width: 16px; height: 28px; }
.app svg { width: 16px; height: 16px; z-index: 1; }
.run::after { content: ""; position: absolute; bottom: 1px; width: 5px; height: 2px; border-radius: 1px; background: #999; }
.now::before { content: ""; position: absolute; inset: 0 -6px; background: #303030; border-radius: 3px; }
.now::after { width: 11px; background: #4cc2ff; }
.tray { display: flex; align-items: center; justify-content: flex-end; gap: 6px; padding-right: 13px; }
.tr { width: 10px; height: 10px; }
.lang { text-align: center; padding: 0 5px 0 4px; }
.lang, .clock { display: flex; flex-direction: column; line-height: 11px; }
.clock { text-align: right; margin-left: 1px; }
.badge { width: 11px; height: 11px; border-radius: 50%; background: #4cc2ff; color: #14303f; font-size: 7px; line-height: 11px; text-align: center; margin-left: 1px; }
</style>
